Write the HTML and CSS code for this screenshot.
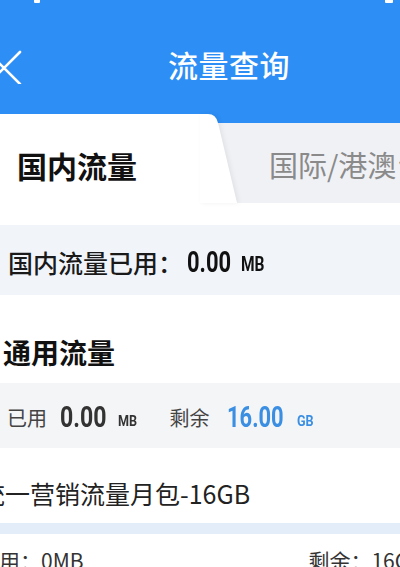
FILE: index.html
```html
<!DOCTYPE html>
<html lang="zh-CN">
<head>
<meta charset="utf-8">
<title>流量查询</title>
<link rel="stylesheet" href="styles.css">
</head>
<body>
<div class="page">
  <header class="header">
    <span class="status-dot status-left"></span>
    <span class="status-dot status-right"></span>
    <svg class="close-icon" width="24" height="40" viewBox="0 0 24 40">
      <path d="M-12 8 L20 40 M-12 40 L20 8" stroke="#fff" stroke-width="2.6" fill="none" stroke-linecap="round"/>
    </svg>
    <h1 class="title">流量查询</h1>
  </header>

  <div class="tabs">
    <div class="tab tab-active">国内流量</div>
    <div class="tab tab-inactive">国际/港澳台</div>
    <svg class="tab-wedge" width="44" height="89" viewBox="0 0 44 89">
      <path d="M0 0 H8 Q16 0 18 9 L37 89 H0 Z" fill="#fff"/>
    </svg>
  </div>

  <div class="spacer"></div>

  <div class="summary">
    <span class="summary-label">国内流量已用：</span>
    <span class="num num-big">0.00</span>
    <span class="num unit-big">MB</span>
  </div>

  <div class="section-title">通用流量</div>

  <div class="usage">
    <span class="usage-label">已用</span>
    <span class="num num-used">0.00</span>
    <span class="num unit-mid">MB</span>
    <span class="usage-label usage-label-gap">剩余</span>
    <span class="num num-left num-blue">16.00</span>
    <span class="num unit-mid unit-gb num-blue">GB</span>
  </div>

  <div class="pkg">统一营销流量月包-16GB</div>

  <div class="progress"></div>

  <div class="pkg-detail">
    <span>已用：0MB</span>
    <span class="pkg-remain">剩余：16GB</span>
  </div>
</div>
</body>
</html>
```

FILE: styles.css
```css
* {
  box-sizing: border-box;
}

html, body {
  margin: 0;
  padding: 0;
}

body {
  width: 400px;
  height: 567px;
  overflow: hidden;
  background: #fff;
  font-family: "Noto Sans CJK SC", "Noto Sans", sans-serif;
  color: #1c1c1c;
}

.page {
  width: 400px;
  overflow: hidden;
}

.header {
  position: relative;
  height: 114px;
  background: #2d8ef5;
  display: flex;
  align-items: center;
  justify-content: center;
  padding-top: 13px;
  padding-left: 58px;
}

.status-dot {
  position: absolute;
  top: 0;
  height: 3px;
  background: #fff;
  border-radius: 0 0 1px 1px;
}

.status-left {
  left: 34px;
  width: 6px;
}

.status-right {
  left: 385px;
  width: 8px;
}

.close-icon {
  position: absolute;
  left: 0;
  top: 44px;
}

.title {
  margin: 0;
  font-size: 30px;
  font-weight: 500;
  color: #fff;
  line-height: 1;
  letter-spacing: 0.5px;
}

.tabs {
  position: relative;
  height: 89px;
  background: #2d8ef5;
  display: flex;
}

.tab {
  display: flex;
  align-items: center;
  white-space: nowrap;
  overflow: hidden;
}

.tab-active {
  width: 205px;
  background: #fff;
  padding-left: 17px;
  padding-top: 12px;
  font-size: 30px;
  font-weight: 700;
  color: #111;
}

.tab-inactive {
  flex: 1;
  margin-top: 9px;
  background: #eff1f5;
  padding-left: 64px;
  padding-top: 2px;
  font-size: 29px;
  color: #8a8a8a;
}

.tab-wedge {
  position: absolute;
  left: 200px;
  top: 0;
  filter: drop-shadow(2px 0 2px rgba(0, 0, 0, 0.06));
}

.spacer {
  height: 22px;
}

.summary {
  height: 70px;
  background: #f1f5fa;
  display: flex;
  align-items: center;
  padding-left: 8px;
  padding-top: 3px;
  white-space: nowrap;
}

.summary-label {
  font-size: 25px;
  font-weight: 500;
  color: #1a1a1a;
}

.num {
  display: inline-block;
  font-family: "Roboto", "DejaVu Sans", sans-serif;
  font-weight: 700;
  line-height: 1;
  transform-origin: left center;
}

.num-big {
  font-size: 30px;
  color: #111;
  margin-left: 4px;
  transform: scaleX(0.73);
  margin-right: -16px;
}

.unit-big {
  font-size: 21px;
  color: #111;
  margin-left: 10px;
  padding-top: 5px;
  transform: scaleX(0.74);
}

.usage {
  height: 65px;
  background: #f4f5f7;
  display: flex;
  align-items: center;
  padding-left: 7px;
  padding-top: 3px;
  white-space: nowrap;
}

.usage-label {
  font-size: 20px;
  color: #444;
}

.usage-label-gap {
  margin-left: 32px;
}

.num-used {
  font-size: 30px;
  color: #333;
  margin-left: 13px;
  transform: scaleX(0.77);
  margin-right: -13px;
}

.num-left {
  font-size: 30px;
  margin-left: 17px;
  transform: scaleX(0.73);
  margin-right: -20px;
}

.unit-mid {
  font-size: 14px;
  color: #333;
  margin-left: 11px;
  padding-top: 7px;
  transform: scaleX(0.9);
  margin-right: -2px;
}

.unit-gb {
  margin-left: 13px;
}

.num-blue {
  color: #3a8fe3;
}

.section-title {
  height: 88px;
  display: flex;
  align-items: center;
  padding-top: 26px;
  padding-left: 3px;
  font-size: 28px;
  font-weight: 700;
  color: #111;
}

.pkg {
  height: 75px;
  display: flex;
  align-items: center;
  padding-top: 15px;
  margin-left: -20px;
  font-size: 25px;
  color: #222;
  white-space: nowrap;
}

.progress {
  height: 11px;
  background: #e3edfa;
}

.pkg-detail {
  display: flex;
  justify-content: space-between;
  margin-left: -22px;
  margin-right: -23px;
  padding-top: 14px;
  font-size: 21px;
  color: #333;
  white-space: nowrap;
  line-height: 1.2;
}

.pkg-remain {
  margin-left: auto;
}
```
